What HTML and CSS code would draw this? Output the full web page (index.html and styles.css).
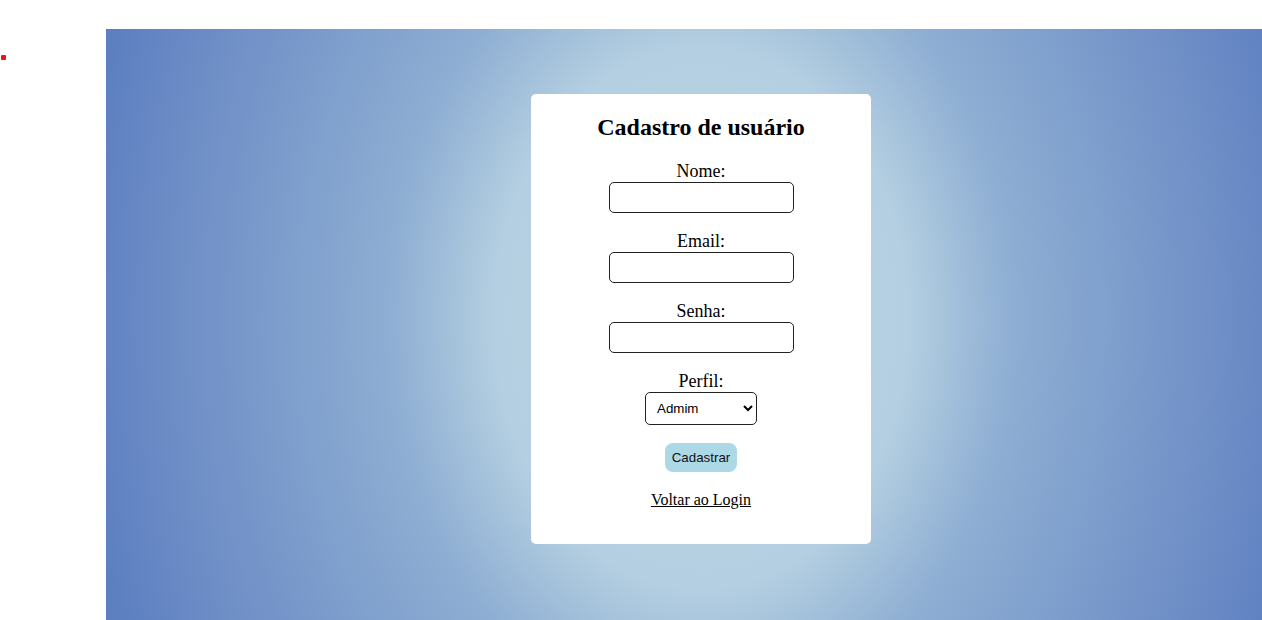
FILE: index.html
```html
<!DOCTYPE html>
<html lang="pt-BR">
<head>
<meta charset="utf-8">
<title>Cadastro de usuário</title>
<link rel="stylesheet" href="styles.css">
</head>
<body>
<div class="page">
  <aside class="side"><span class="dot"></span></aside>
  <main class="panel">
    <div class="card">
      <h2 class="title">Cadastro de usuário</h2>
      <form class="form">
        <div class="group">
          <label class="label" for="nome">Nome:</label>
          <input class="field" id="nome" type="text">
        </div>
        <div class="group">
          <label class="label" for="email">Email:</label>
          <input class="field" id="email" type="email">
        </div>
        <div class="group">
          <label class="label" for="senha">Senha:</label>
          <input class="field" id="senha" type="password">
        </div>
        <div class="group">
          <label class="label" for="perfil">Perfil:</label>
          <select class="select" id="perfil">
            <option>Admim</option>
            <option>Usuário</option>
          </select>
        </div>
        <button class="btn" type="button">Cadastrar</button>
      </form>
      <p class="back"><a href="#" class="link">Voltar ao Login</a></p>
    </div>
  </main>
</div>
</body>
</html>
```
FILE: styles.css
```css
html, body {
  margin: 0;
  padding: 0;
  overflow: hidden;
  background: #fff;
}
body {
  font-family: "Liberation Serif", "Times New Roman", serif;
}
.page {
  display: flex;
  align-items: flex-start;
  width: 1262px;
  height: 620px;
  overflow: hidden;
}
.side {
  width: 106px;
  flex-shrink: 0;
}
.dot {
  display: block;
  width: 5px;
  height: 5px;
  margin: 55px 0 0 1px;
  background: #e8141c;
  border-radius: 1px;
}
.panel {
  flex-shrink: 0;
  width: 1190px;
  height: 591px;
  margin-top: 29px;
  display: flex;
  justify-content: center;
  align-items: flex-start;
  background: radial-gradient(ellipse 690px 900px at 595px 290px,
    #bdd7e4 0%, #b4cfe1 30%, #8eaed3 45%, #6c8cc6 78%, #5d80c1 90%, #5a7cc0 100%);
}
.card {
  box-sizing: border-box;
  width: 340px;
  height: 450px;
  margin-top: 65px;
  padding: 20px 30px;
  background: #fff;
  border-radius: 5px;
  text-align: center;
}
.title {
  margin: 0 0 20px;
  font-size: 24px;
  font-weight: bold;
  line-height: 26.6px;
}
.form {
  display: flex;
  flex-direction: column;
  align-items: center;
}
.group {
  display: flex;
  flex-direction: column;
  align-items: center;
  margin-bottom: 18px;
}
.label {
  font-size: 18px;
  line-height: 20px;
  margin-bottom: 1px;
}
.field {
  box-sizing: border-box;
  width: 185px;
  height: 31px;
  border: 1px solid #222;
  border-radius: 5px;
  padding: 4px 8px;
  background: #fff;
}
.select {
  box-sizing: border-box;
  width: 112px;
  height: 33px;
  border: 1px solid #222;
  border-radius: 5px;
  padding: 0 4px 0 7px;
  background: #fff;
  font-family: "Liberation Sans", Arial, sans-serif;
  font-size: 13.33px;
  color: #000;
}
.btn {
  box-sizing: border-box;
  height: 29px;
  padding: 0 7px;
  border: none;
  border-radius: 8px;
  background: #add8e6;
  font-family: "Liberation Sans", Arial, sans-serif;
  font-size: 13.33px;
  color: #111;
}
.back {
  margin: 19px 0 0;
  font-size: 16px;
  line-height: 18px;
}
.link {
  color: #000;
  text-decoration: underline;
}
```
